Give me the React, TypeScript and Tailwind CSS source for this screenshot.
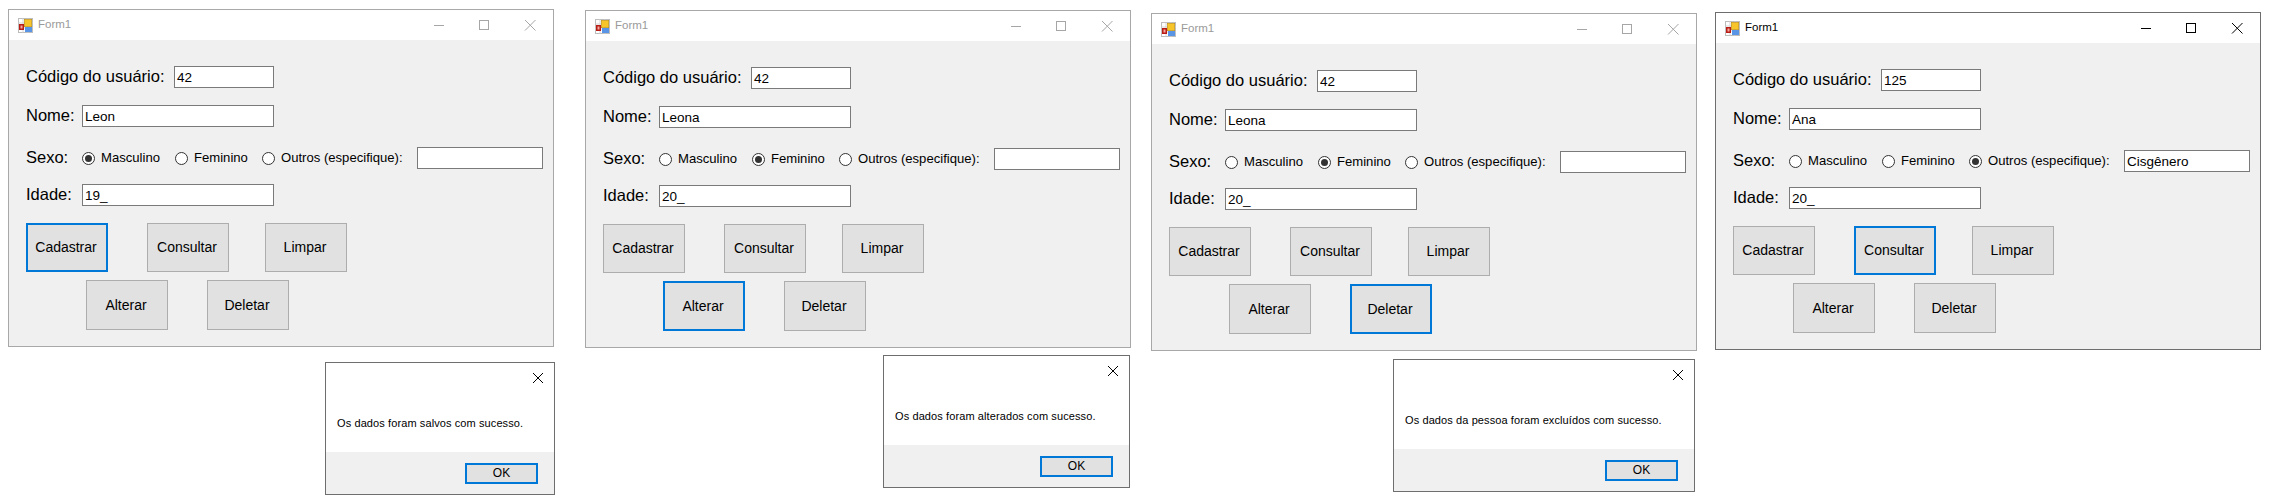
const font = "[font-family:'Liberation_Sans',Arial,sans-serif]";

function AppIcon() {
  return (
    <svg width="15" height="15" viewBox="0 0 15 15" className="shrink-0">
      <rect x="0.5" y="0.5" width="14" height="14" fill="#fff" stroke="#bdbdbd" />
      <path d="M5 .5v14M10 .5v14M.5 5h14M.5 10h14" stroke="#d4d4d4" fill="none" />
      <rect x="1" y="6" width="5" height="6" fill="#b81c14" />
      <rect x="2.5" y="7.5" width="2" height="3" fill="#f4a8a0" />
      <rect x="7" y="9" width="7" height="5" fill="#5a94e4" />
      <rect x="6.3" y="1.3" width="7.4" height="7.4" fill="#f7c52a" stroke="#b88a10" strokeWidth="0.6" />
    </svg>
  );
}

function Controls({ active }: { active: boolean }) {
  const c = active ? "#000000" : "#a6a6a6";
  return (
    <div className="ml-auto flex items-center">
      <svg width="45" height="20" viewBox="0 0 45 20" className="block">
        <path d="M18 10.5h10" stroke={c} fill="none" />
      </svg>
      <svg width="46" height="20" viewBox="0 0 46 20" className="block">
        <rect x="18.5" y="5.5" width="9" height="9" stroke={c} fill="none" />
      </svg>
      <svg width="46" height="20" viewBox="0 0 46 20" className="block">
        <path d="M18 5l10.5 10.5M28.5 5L18 15.5" stroke={c} fill="none" />
      </svg>
    </div>
  );
}

function Input({ value, className }: { value: string; className: string }) {
  return (
    <div className={`h-[22px] border border-[#7a7a7a] bg-white pl-[2px] text-[13.5px] leading-[21px] text-black ${className}`}>
      {value}
    </div>
  );
}

function Radio({ label, on, className }: { label: string; on: boolean; className: string }) {
  return (
    <div className={`flex items-center ${className}`}>
      <div className="flex h-[13px] w-[13px] shrink-0 items-center justify-center rounded-full border border-[#333333] bg-white">
        {on && <div className="h-[7px] w-[7px] rounded-full bg-[#333333]" />}
      </div>
      <span className="ml-[6px] text-[13.1px] leading-[16px] text-black">{label}</span>
    </div>
  );
}

function Btn({ label, focus, className }: { label: string; focus: boolean; className: string }) {
  return (
    <div
      className={`flex items-center justify-center bg-[#e1e1e1] pr-[2px] text-[14px] text-black ${
        focus ? "border-2 border-[#0078d7]" : "border border-[#adadad]"
      } ${className}`}
    >
      {label}
    </div>
  );
}

function Label({ text, className }: { text: string; className: string }) {
  return <span className={`pb-[2px] pl-[1px] text-[16.5px] text-black ${className}`}>{text}</span>;
}

type FormProps = {
  pos: string;
  active?: boolean;
  code: string;
  name: string;
  sexo: number;
  other?: string;
  age: string;
  focus: string;
};

function Form({ pos, active = false, code, name, sexo, other = "", age, focus }: FormProps) {
  return (
    <div
      className={`absolute flex h-[338px] w-[546px] flex-col border bg-[#f0f0f0] ${
        active ? "border-[#6e6e6e]" : "border-[#a8a8a8]"
      } ${pos}`}
    >
      <div className="flex h-[30px] items-center bg-white pl-[9px]">
        <AppIcon />
        <span className={`ml-[5px] text-[11.5px] ${active ? "text-black" : "text-[#9a9a9a]"}`}>Form1</span>
        <Controls active={active} />
      </div>
      <div className="flex flex-col pl-[16px]">
        <div className="mt-[26px] flex h-[22px] items-center">
          <Label text="Código do usuário:" className="w-[149px]" />
          <Input value={code} className="w-[100px]" />
        </div>
        <div className="mt-[17px] flex h-[22px] items-center">
          <Label text="Nome:" className="w-[57px]" />
          <Input value={name} className="w-[192px]" />
        </div>
        <div className="mt-[20px] flex h-[22px] items-center">
          <Label text="Sexo:" className="w-[57px]" />
          <Radio label="Masculino" on={sexo === 0} className="w-[93px]" />
          <Radio label="Feminino" on={sexo === 1} className="w-[87px]" />
          <Radio label="Outros (especifique):" on={sexo === 2} className="w-[155px]" />
          <Input value={other} className="w-[126px]" />
        </div>
        <div className="mt-[15px] flex h-[22px] items-center">
          <Label text="Idade:" className="w-[57px]" />
          <Input value={age} className="w-[192px]" />
        </div>
        <div className="mt-[17px] flex pl-[1px]">
          <Btn label="Cadastrar" focus={focus === "Cadastrar"} className="h-[49px] w-[82px]" />
          <Btn label="Consultar" focus={focus === "Consultar"} className="ml-[39px] h-[49px] w-[82px]" />
          <Btn label="Limpar" focus={focus === "Limpar"} className="ml-[36px] h-[49px] w-[82px]" />
        </div>
        <div className="mt-[8px] flex pl-[61px]">
          <Btn label="Alterar" focus={focus === "Alterar"} className="h-[50px] w-[82px]" />
          <Btn label="Deletar" focus={focus === "Deletar"} className="ml-[39px] h-[50px] w-[82px]" />
        </div>
      </div>
    </div>
  );
}

function Dialog({ pos, text }: { pos: string; text: string }) {
  return (
    <div className={`absolute flex h-[133px] flex-col border border-[#6e6e6e] bg-white ${pos}`}>
      <div className="flex h-[29px] items-center justify-end pr-[10px]">
        <svg width="12" height="12" viewBox="0 0 12 12" className="block">
          <path d="M1 1l10 10M11 1L1 11" stroke="#000" fill="none" />
        </svg>
      </div>
      <div className="flex h-[60px] items-center whitespace-nowrap pl-[11px] pt-[3px] text-[11px] tracking-[0.1px] text-black">
        {text}
      </div>
      <div className="flex flex-1 items-center justify-end bg-[#f0f0f0] pr-[16px]">
        <div className="flex h-[21px] w-[73px] items-center justify-center border-2 border-[#0078d7] bg-[#e1e1e1] text-[12px] text-black">
          OK
        </div>
      </div>
    </div>
  );
}

export default function App() {
  return (
    <div className={`relative h-[504px] w-[2288px] overflow-hidden bg-white ${font}`}>
      <Form pos="left-[8px] top-[9px]" code="42" name="Leon" sexo={0} age="19_" focus="Cadastrar" />
      <Form pos="left-[585px] top-[10px]" code="42" name="Leona" sexo={1} age="20_" focus="Alterar" />
      <Form pos="left-[1151px] top-[13px]" code="42" name="Leona" sexo={1} age="20_" focus="Deletar" />
      <Form pos="left-[1715px] top-[12px]" active code="125" name="Ana" sexo={2} other="Cisgênero" age="20_" focus="Consultar" />
      <Dialog pos="left-[325px] top-[362px] w-[230px]" text="Os dados foram salvos com sucesso." />
      <Dialog pos="left-[883px] top-[355px] w-[247px]" text="Os dados foram alterados com sucesso." />
      <Dialog pos="left-[1393px] top-[359px] w-[302px]" text="Os dados da pessoa foram excluídos com sucesso." />
    </div>
  );
}
